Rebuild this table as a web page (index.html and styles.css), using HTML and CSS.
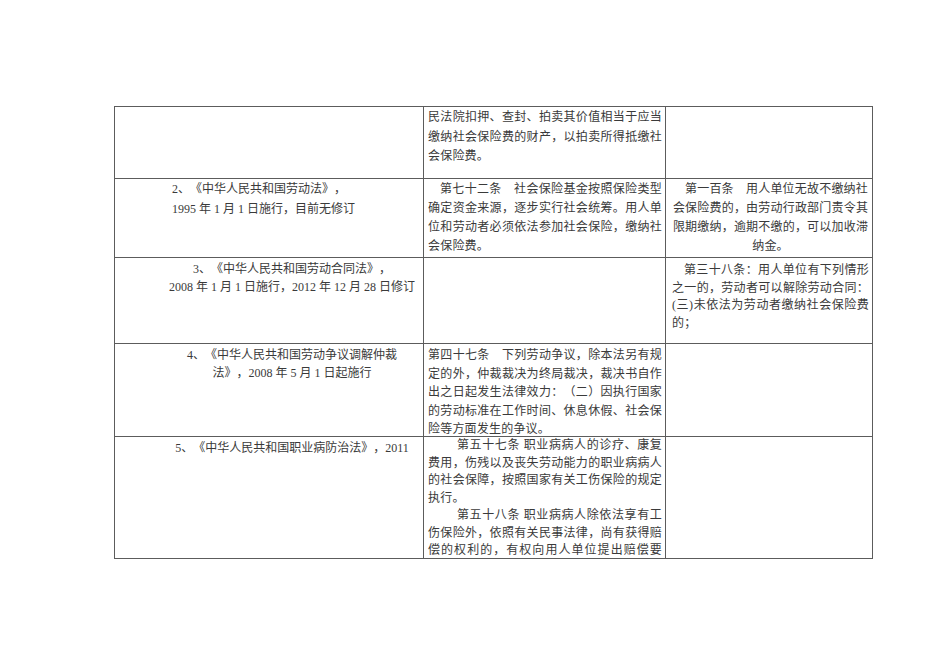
FILE: index.html
```html
<!DOCTYPE html>
<html lang="zh-CN">
<head>
<meta charset="utf-8">
<title>社会保险相关法律条文</title>
<link rel="stylesheet" href="styles.css">
</head>
<body>
<div class="sheet">
  <div class="cell c1 r1"></div>
  <div class="cell c2 r1"><p class="jt lh195">民法院扣押、查封、拍卖其价值相当于应当缴纳社会保险费的财产，以拍卖所得抵缴社会保险费。</p></div>
  <div class="cell c3 r1"></div>

  <div class="cell c1 r2 law-left"><p>2、《中华人民共和国劳动法》，<br>1995 年 1 月 1 日施行，目前无修订</p></div>
  <div class="cell c2 r2"><p class="jt ind1">第七十二条　社会保险基金按照保险类型确定资金来源，逐步实行社会统筹。用人单位和劳动者必须依法参加社会保险，缴纳社会保险费。</p></div>
  <div class="cell c3 r2"><p class="ctr ind1">第一百条　用人单位无故不缴纳社会保险费的，由劳动行政部门责令其限期缴纳，逾期不缴的，可以加收滞纳金。</p></div>

  <div class="cell c1 r3 law-ctr"><p>3、《中华人民共和国劳动合同法》，<br>2008 年 1 月 1 日施行，2012 年 12 月 28 日修订</p></div>
  <div class="cell c2 r3"></div>
  <div class="cell c3 r3 tight"><p class="jt ind1">第三十八条：用人单位有下列情形之一的，劳动者可以解除劳动合同：(三)未依法为劳动者缴纳社会保险费的；</p></div>

  <div class="cell c1 r4 law-ctr"><p>4、《中华人民共和国劳动争议调解仲裁<br>法》，2008 年 5 月 1 日起施行</p></div>
  <div class="cell c2 r4"><p class="jt lh185">第四十七条　下列劳动争议，除本法另有规定的外，仲裁裁决为终局裁决，裁决书自作出之日起发生法律效力：（二）因执行国家的劳动标准在工作时间、休息休假、社会保险等方面发生的争议。</p></div>
  <div class="cell c3 r4"></div>

  <div class="cell c1 r5 law-ctr"><p>5、《中华人民共和国职业病防治法》，2011</p></div>
  <div class="cell c2 r5"><p class="jt ind25 lh175">第五十七条 职业病病人的诊疗、康复费用，伤残以及丧失劳动能力的职业病病人的社会保障，按照国家有关工伤保险的规定执行。</p><p class="jt ind25 lh175 cont">第五十八条 职业病病人除依法享有工伤保险外，依照有关民事法律，尚有获得赔偿的权利的，有权向用人单位提出赔偿要</p></div>
  <div class="cell c3 r5"></div>
</div>
</body>
</html>
```

FILE: styles.css
```css
html, body {
  margin: 0;
  padding: 0;
  background: #ffffff;
}

body {
  font-family: "Liberation Serif", "Noto Sans CJK SC", serif;
  font-size: 12px;
  color: #3a3a3a;
  text-spacing-trim: space-all;
}

.sheet {
  margin: 106px 0 0 114px;
  width: 758px;
  display: grid;
  grid-template-columns: 309px 242px 207px;
  grid-template-rows: 72px 79px 86px 93px 122px;
  border-top: 1px solid #5c5c5c;
  border-left: 1px solid #5c5c5c;
}

.cell {
  border-right: 1px solid #5c5c5c;
  border-bottom: 1px solid #5c5c5c;
  overflow: hidden;
}

.cell p {
  margin: 0;
  line-height: 19px;
}

.c2 {
  padding: 1px 3px 0 4px;
}

.c3 {
  padding: 1px 3px 0 6px;
}

.c3.tight {
  padding-top: 4px;
}

.c3.tight p {
  line-height: 17.5px;
}

.c2 p,
.c3 p {
  letter-spacing: 0.2px;
}

.c2.r4 {
  padding-top: 2px;
}

.c2.r5 {
  padding-top: 0;
}

.jt {
  text-align: justify;
}

.cont {
  text-align-last: justify;
}

.ctr {
  text-align: center;
}

.ind1 {
  text-indent: 1em;
}

.ind25 {
  text-indent: 29px;
}

.lh195 {
  line-height: 19.5px !important;
}

.lh185 {
  line-height: 18.5px !important;
}

.lh175 {
  line-height: 17.5px !important;
}

.law-left {
  padding: 0 4px 0 57px;
}

.law-left p {
  line-height: 20px;
}

.law-ctr {
  padding: 2px 4px 0 50px;
  text-align: center;
}

.law-ctr p {
  line-height: 18px;
}
```
